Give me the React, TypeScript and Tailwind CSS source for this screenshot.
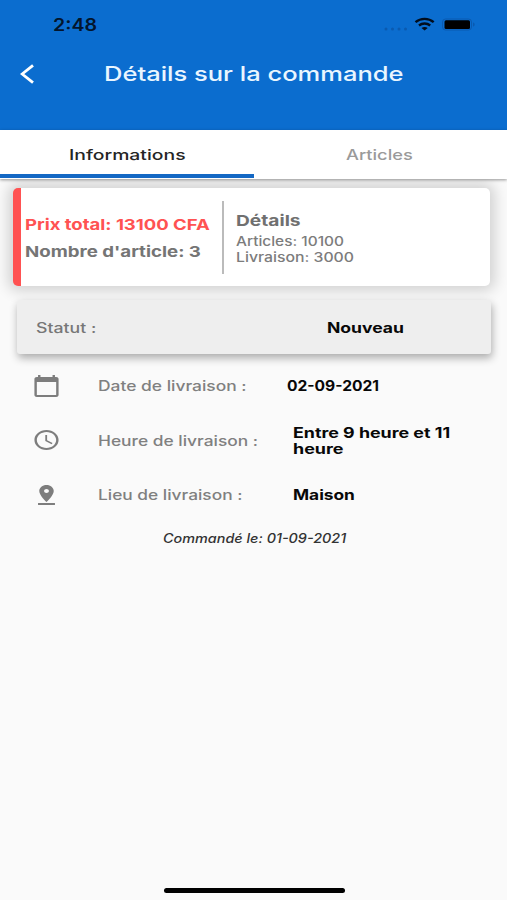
import React from "react";

type WideProps = {
  children: React.ReactNode,
  className?: string
}

type InfoRowProps = {
  icon: string,
  label: string,
  labelClass: string,
  className: string,
  children: React.ReactNode
}

const CALENDAR = "M20 3h-1V1h-2v2H7V1H5v2H4c-1.1 0-2 .9-2 2v16c0 1.1.9 2 2 2h16c1.1 0 2-.9 2-2V5c0-1.1-.9-2-2-2zm0 18H4V8h16v13z"
const CLOCK = "M11.99 2C6.47 2 2 6.48 2 12s4.47 10 9.99 10C17.52 22 22 17.52 22 12S17.52 2 11.99 2zM12 20c-4.42 0-8-3.58-8-8s3.58-8 8-8 8 3.58 8 8-3.58 8-8 8zm.5-13H11v6l5.25 3.15.75-1.23-4.5-2.67z"
const PIN = "M18 8c0-3.31-2.69-6-6-6S6 4.69 6 8c0 4.5 6 11 6 11s6-6.5 6-11zm-8 0c0-1.1.9-2 2-2s2 .9 2 2-.89 2-2 2c-1.1 0-2-.9-2-2zM5 20v2h14v-2H5z"


// Wide lettering: every label is widened from its left edge
function Wide({children, className = ""}: WideProps){
  return <span className={`block w-max whitespace-nowrap origin-left ${className}`}>{children}</span>
}


export default function App(){
  return (
    <section className="flex flex-col w-full h-[900px] overflow-hidden bg-[#fafafa] font-['Inter',sans-serif] font-medium">

      <header className="h-[130px] shrink-0 bg-[#0b6dcf]">
        <StatusBar/>
        <div className="flex items-center h-[50px] pl-5">
          <svg width="15" height="20" viewBox="0 0 15 20" className="shrink-0" fill="none" stroke="white" strokeWidth="2.8">
            <path d="M13 1.3 2.2 10 13 18.7"/>
          </svg>
          <h1 className="ml-[69px] text-[20px] leading-6 text-[#e9f6ff]">
            <Wide className="scale-x-[1.275]">Détails sur la commande</Wide>
          </h1>
        </div>
      </header>

      <nav className="relative z-10 flex h-[49px] shrink-0 bg-white text-[14.5px] shadow-[0_1px_3px_rgba(0,0,0,0.4)]">
        <div className="w-[254px] h-[47.5px] border-b-4 border-[#1468c4] pl-[68.5px] pt-[15px] leading-5 text-[#252525]">
          <Wide className="scale-x-[1.335]">Informations</Wide>
        </div>
        <div className="pl-[92px] pt-[15px] leading-5 text-[#9a9a9a]">
          <Wide className="scale-x-[1.258]">Articles</Wide>
        </div>
      </nav>

      <main className="flex-auto">
        <PriceCard/>

        <div className="flex items-center h-[54px] ml-[17px] mr-4 mt-3.5 rounded-[3px] bg-[#eee] text-[14px] shadow-[1px_4px_8px_rgba(0,0,0,0.32)]">
          <div className="w-[310px] pl-[19px] text-[#777]"><Wide className="scale-x-[1.263]">Statut :</Wide></div>
          <div className="font-bold text-[#080808]"><Wide className="scale-x-[1.252]">Nouveau</Wide></div>
        </div>

        <div className="pt-[5px] text-[14px]">
          <InfoRow icon={CALENDAR} label="Date de livraison :" labelClass="scale-x-[1.243] w-[189px]" className="h-[54px]">
            <Wide className="scale-x-[1.113]">02-09-2021</Wide>
          </InfoRow>
          <InfoRow icon={CLOCK} label="Heure de livraison :" labelClass="scale-x-[1.24] w-[195px]" className="h-[55px]">
            <Wide className="scale-x-[1.273]">Entre 9 heure et 11</Wide>
            <Wide className="scale-x-[1.278]">heure</Wide>
          </InfoRow>
          <InfoRow icon={PIN} label="Lieu de livraison :" labelClass="scale-x-[1.237] w-[195px]" className="h-[54px]">
            <Wide className="scale-x-[1.235]">Maison</Wide>
          </InfoRow>
        </div>

        <p className="pl-[162.5px] pt-[9px] text-[12.5px] leading-4 italic text-[#333]">
          <Wide className="scale-x-[1.151]">Commandé le: 01-09-2021</Wide>
        </p>
      </main>

      <footer className="flex justify-center pb-[7.5px]">
        <div className="w-[181px] h-[5px] ml-px rounded-full bg-black"/>
      </footer>

    </section>
  )
}


function StatusBar(){
  return (
    <div className="flex items-center h-[49px] pl-[53px] text-[#03152c]">
      <div className="w-[331px] text-[17px] leading-5 font-semibold"><Wide className="scale-x-[1.152]">2:48</Wide></div>
      <svg width="92" height="16" viewBox="0 0 92 16" className="shrink-0">
        <g fill="#0a5ab0">
          <circle cx="2" cy="12" r="1.5"/>
          <circle cx="8.5" cy="12" r="1.5"/>
          <circle cx="15" cy="12" r="1.5"/>
          <circle cx="21.5" cy="12" r="1.5"/>
        </g>
        <g fill="none" stroke="#020d1c" strokeWidth="2.4">
          <path d="M31.5 5.2c5.2-4.5 13-4.5 18.2 0"/>
          <path d="M35 8.5c3.2-2.6 8-2.6 11.2 0"/>
        </g>
        <path d="M37.5 11c1.8-1.4 4.4-1.4 6.2 0l-3.1 2.5z" fill="#020d1c"/>
        <rect x="58.5" y="2" width="29" height="11" rx="3" fill="none" stroke="#0a5ab0"/>
        <rect x="60.5" y="3.3" width="25.5" height="8.7" rx="1.5" fill="#000"/>
        <path d="M89 5.5c2.2.5 2.2 3.5 0 4z" fill="#0a5ab0"/>
      </svg>
    </div>
  )
}


function PriceCard(){
  return (
    <div className="flex h-[98px] ml-[12.5px] mr-[17px] mt-[9px] rounded-[5px] border-l-8 border-[#ff5252] bg-white shadow-[0_0_14px_5px_rgba(0,0,0,0.16)]">
      <div className="w-[203px] h-[73px] mt-[13px] pl-[4.5px] pt-2.5 border-r-2 border-[#bbb] text-[15px] leading-[27px] font-bold">
        <Wide className="scale-x-[1.233] text-[#ff5252]">Prix total: 13100 CFA</Wide>
        <Wide className="scale-x-[1.245] text-[#757575]">Nombre d'article: 3</Wide>
      </div>
      <div className="pl-3 pt-[22px] text-[13px] leading-4 text-[#7c7c7c]">
        <Wide className="scale-x-[1.276] text-[15px] leading-[22px] mb-px font-bold text-[#707070]">Détails</Wide>
        <Wide className="scale-x-[1.187]">Articles: 10100</Wide>
        <Wide className="scale-x-[1.215]">Livraison: 3000</Wide>
      </div>
    </div>
  )
}


function InfoRow({icon, label, labelClass, className, children}: InfoRowProps){
  return (
    <div className={`flex items-center pl-[31.5px] leading-4 ${className}`}>
      <svg width="29" height="24" viewBox="0 0 24 24" preserveAspectRatio="none" className="shrink-0 mb-px" fill="#7d7d7d">
        <path d={icon}/>
      </svg>
      <div className="ml-[37px] text-[#808080]">
        <span className={`block whitespace-nowrap origin-left ${labelClass}`}>{label}</span>
      </div>
      <div className="font-bold text-[#080808]">{children}</div>
    </div>
  )
}
